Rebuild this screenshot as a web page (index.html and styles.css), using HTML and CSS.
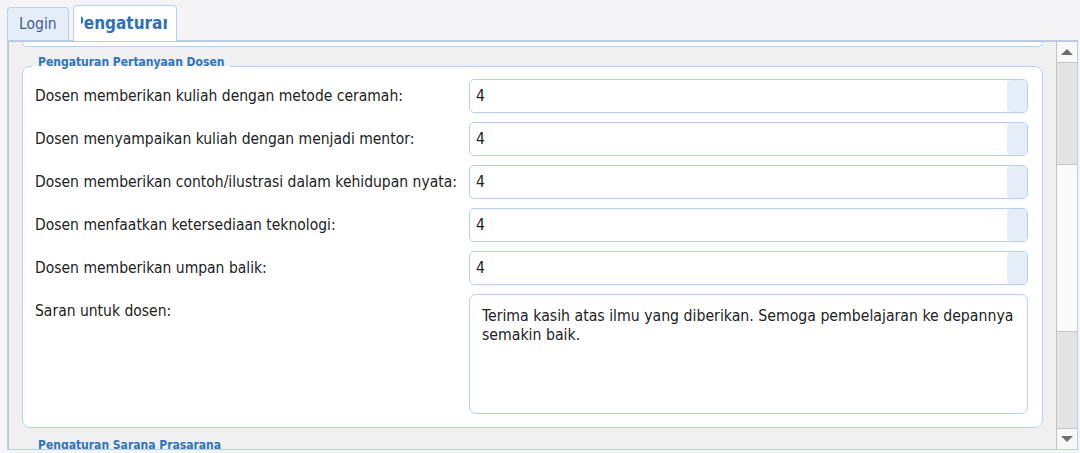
FILE: index.html
```html
<!DOCTYPE html>
<html>
<head>
<meta charset="utf-8">
<link rel="stylesheet" href="styles.css">
</head>
<body>
<div class="tabs">
  <div class="tab">Login</div>
  <div class="tab tab-active"><span class="tab-clip"><span class="tab-text">Pengaturan</span></span></div>
</div>
<div class="panel">
  <div class="scroll">
    <div class="content">
      <div class="fs-tail"></div>
      <fieldset class="fs">
        <legend class="fs-legend">Pengaturan Pertanyaan Dosen</legend>
        <div class="row">
          <div class="label">Dosen memberikan kuliah dengan metode ceramah:</div>
          <div class="spin"><span class="spin-value">4</span><span class="spin-btn"></span></div>
        </div>
        <div class="row">
          <div class="label">Dosen menyampaikan kuliah dengan menjadi mentor:</div>
          <div class="spin"><span class="spin-value">4</span><span class="spin-btn"></span></div>
        </div>
        <div class="row">
          <div class="label">Dosen memberikan contoh/ilustrasi dalam kehidupan nyata:</div>
          <div class="spin"><span class="spin-value">4</span><span class="spin-btn"></span></div>
        </div>
        <div class="row">
          <div class="label">Dosen menfaatkan ketersediaan teknologi:</div>
          <div class="spin"><span class="spin-value">4</span><span class="spin-btn"></span></div>
        </div>
        <div class="row">
          <div class="label">Dosen memberikan umpan balik:</div>
          <div class="spin"><span class="spin-value">4</span><span class="spin-btn"></span></div>
        </div>
        <div class="row row-top">
          <div class="label label-top">Saran untuk dosen:</div>
          <div class="textbox">Terima kasih atas ilmu yang diberikan. Semoga pembelajaran ke depannya semakin baik.</div>
        </div>
      </fieldset>
      <fieldset class="fs fs-next">
        <legend class="fs-legend">Pengaturan Sarana Prasarana</legend>
        <div class="fs-filler"></div>
      </fieldset>
    </div>
    <div class="sbar">
      <div class="sbar-btn"><span class="arrow-up"></span></div>
      <div class="sbar-track">
        <div class="sbar-gap"></div>
        <div class="sbar-thumb"></div>
      </div>
      <div class="sbar-btn sbar-btn-down"><span class="arrow-down"></span></div>
    </div>
  </div>
</div>
</body>
</html>
```

FILE: styles.css
```css
html, body {
  margin: 0;
  padding: 0;
}
body {
  width: 1080px;
  height: 453px;
  overflow: hidden;
  background: #f4f4f6;
  font-family: "DejaVu Sans Condensed", "DejaVu Sans", sans-serif;
  font-stretch: condensed;
  font-size: 15.5px;
  color: #222;
}
.tabs {
  display: flex;
  align-items: flex-end;
  gap: 4px;
  height: 40px;
  padding-left: 7px;
  box-sizing: border-box;
}
.tab {
  box-sizing: border-box;
  height: 33px;
  padding: 0 11px;
  border: 1px solid #b7d1f1;
  border-bottom: none;
  border-radius: 4px 4px 0 0;
  background: #e4edf8;
  color: #3e5f92;
  line-height: 33px;
}
.tab-active {
  position: relative;
  z-index: 1;
  width: 104px;
  height: 36px;
  margin-bottom: -1px;
  padding: 0 0 0 7px;
  background: #fff;
  color: #2b70b8;
  font-weight: bold;
  font-size: 17px;
  line-height: 34px;
}
.tab-clip {
  display: block;
  width: 86px;
  overflow: hidden;
  white-space: nowrap;
}
.tab-text {
  display: inline-block;
  margin-left: -8px;
}
.panel {
  box-sizing: border-box;
  width: 1071px;
  height: 410px;
  margin-left: 7px;
  border: 1px solid #b5cff0;
}
.scroll {
  box-sizing: border-box;
  display: flex;
  height: 408px;
  border-top: 1px solid #c6c6c6;
  border-left: 1px solid #c6c6c6;
  background: #f0f0f0;
}
.content {
  flex: 1;
  overflow: hidden;
  padding: 0 13px;
}
.fs-tail {
  height: 4px;
  border: 1px solid #b5d0f5;
  border-top: none;
  border-radius: 0 0 8px 8px;
  background: #fff;
}
.fs {
  margin: 8px 0 0 0;
  padding: 1px 14px 13px 12px;
  border: 1px solid #b5d0f5;
  border-radius: 8px;
  background: #fff;
  min-width: 0;
}
.fs-next {
  margin-top: 10px;
}
.fs-legend {
  margin-left: -3px;
  padding: 0 6px 9px 6px;
  font-size: 12px;
  line-height: 14px;
  font-weight: bold;
  color: #2e74bf;
}
.row {
  display: flex;
  align-items: center;
  margin-bottom: 9px;
}
.row:last-child {
  margin-bottom: 0;
}
.row-top {
  align-items: flex-start;
}
.label {
  width: 434px;
  flex: none;
  white-space: nowrap;
}
.label-top {
  padding-top: 8px;
}
.spin {
  flex: 1;
  display: flex;
  box-sizing: border-box;
  height: 34px;
  border: 1px solid #b5d0f5;
  border-radius: 5px;
  overflow: hidden;
}
.spin-value {
  flex: 1;
  padding-left: 6px;
  line-height: 32px;
}
.spin-btn {
  width: 20px;
  background: #e5edf8;
  border-radius: 4px 0 0 4px;
}
.textbox {
  flex: 1;
  box-sizing: border-box;
  height: 120px;
  padding: 11px 12px;
  border: 1px solid #b5d0f5;
  border-radius: 7px;
  line-height: 19px;
  font-size: 15.7px;
}
.fs-filler {
  height: 100px;
}
.sbar {
  flex: none;
  width: 20px;
  display: flex;
  flex-direction: column;
  border-left: 1px solid #c3c3c3;
  background: #e4e4e4;
}
.sbar-btn {
  flex: none;
  height: 20px;
  background: #f8f8f8;
  border-bottom: 1px solid #c3c3c3;
  display: flex;
  align-items: center;
  justify-content: center;
}
.sbar-btn-down {
  border-bottom: none;
  border-top: 1px solid #c3c3c3;
}
.arrow-up {
  width: 0;
  height: 0;
  border-left: 6px solid transparent;
  border-right: 6px solid transparent;
  border-bottom: 6px solid #6e6e6e;
}
.arrow-down {
  width: 0;
  height: 0;
  border-left: 6px solid transparent;
  border-right: 6px solid transparent;
  border-top: 6px solid #6e6e6e;
}
.sbar-track {
  flex: 1;
}
.sbar-gap {
  height: 101px;
}
.sbar-thumb {
  height: 166px;
  background: #fafafa;
  border-top: 1px solid #c3c3c3;
  border-bottom: 1px solid #c3c3c3;
}
```
